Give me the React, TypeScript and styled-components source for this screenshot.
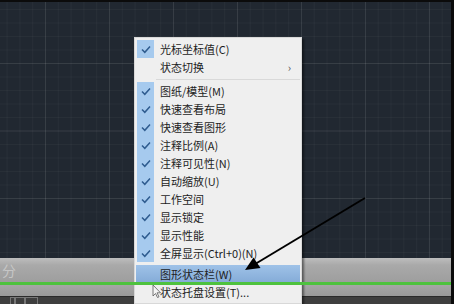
import React from 'react';
import styled, { createGlobalStyle } from 'styled-components';

const GlobalStyle = createGlobalStyle`
    html, body {
        margin: 0;
        padding: 0;
        background: #0b0b0b;
    }
`;

const Screen = styled.div`
    position: relative;
    width: 454px;
    height: 304px;
    padding: 2px 3px 0 0;
    box-sizing: border-box;
    background: #0b0b0b;
    display: flex;
    flex-direction: column;
    overflow: hidden;
    font-family: 'Noto Sans CJK SC', 'Noto Sans', sans-serif;
`;

const Canvas = styled.div`
    height: 256px;
    background-color: #212831;
    background-image:
        linear-gradient(90deg, rgba(255, 255, 255, 0.07) 1px, transparent 1px),
        linear-gradient(0deg, rgba(255, 255, 255, 0.07) 1px, transparent 1px),
        linear-gradient(90deg, rgba(255, 255, 255, 0.03) 1px, transparent 1px),
        linear-gradient(0deg, rgba(255, 255, 255, 0.03) 1px, transparent 1px);
    background-size: 64px 67.5px, 64px 67.5px, 12.8px 13.5px, 12.8px 13.5px;
    background-position: 45px 62px, 45px 62px, 45px 62px, 45px 62px;
`;

const StatusBar = styled.div`
    height: 24px;
    display: flex;
    align-items: center;
    background: linear-gradient(#bdbdbd, #a9a9a9 30%, #9e9e9e);
`;

const CommandHint = styled.span`
    margin-left: 2px;
    font-size: 14px;
    color: #cfcfcf;
    opacity: 0.8;
`;

const GreenLine = styled.div`
    position: relative;
    z-index: 3;
    height: 3px;
    background: #4ec23e;
`;

const LowerBar = styled.div`
    height: 11px;
    background: linear-gradient(#a6a6a6, #999999);
`;

const TabStrip = styled.div`
    height: 8px;
    display: flex;
    padding-left: 10px;
    background: #3e3e3e;
    border-top: 1px solid #2a2a2a;
    box-sizing: border-box;
`;

const Tab = styled.div<{ $w: number }>`
    width: ${(p) => p.$w}px;
    border: 1px solid #777;
    border-bottom: none;
    box-sizing: border-box;
`;

const Menu = styled.div`
    position: absolute;
    z-index: 2;
    left: 134px;
    top: 37px;
    width: 168px;
    padding: 2px 1px;
    box-sizing: border-box;
    background: #efefef;
    border: 1px solid #d8d8d8;
    box-shadow: 2px 2px 2px rgba(0, 0, 0, 0.45);
`;

const Item = styled.div<{ $active?: boolean }>`
    height: 18px;
    display: flex;
    align-items: center;
    background: ${(p) => (p.$active ? 'linear-gradient(#9fc2e8, #84abd7)' : 'transparent')};
`;

const CheckCell = styled.div<{ $on?: boolean }>`
    width: 17px;
    height: 100%;
    margin-left: 1px;
    display: flex;
    align-items: center;
    justify-content: center;
    background: ${(p) => (p.$on ? '#a6caee' : 'transparent')};
`;

const Label = styled.span`
    flex: 1;
    padding-left: 6px;
    font-size: 11px;
    color: #1d1d1d;
    white-space: nowrap;
`;

const SubArrow = styled.span`
    margin-right: 9px;
    font-size: 11px;
    color: #555;
`;

const Separator = styled.div<{ $h: number }>`
    height: ${(p) => p.$h}px;
    display: flex;
    align-items: center;
    padding-left: 20px;
    &::after {
        content: '';
        flex: 1;
        height: 1px;
        background: ${(p) => (p.$h > 4 ? '#d9d9d9' : 'transparent')};
    }
`;

const Overlay = styled.svg`
    position: absolute;
    z-index: 4;
    left: 0;
    top: 0;
    pointer-events: none;
`;

const Check = () => (
    <svg width="10" height="9" viewBox="0 0 10 9">
        <polyline points="1,4.5 3.8,7.3 9,1.5" fill="none" stroke="#2f5c8f" strokeWidth="1.5" />
    </svg>
);

type Entry = { label: string; checked?: boolean; sub?: boolean; active?: boolean };

const groupA: Entry[] = [
    { label: '光标坐标值(C)', checked: true },
    { label: '状态切换', sub: true },
];

const groupB: Entry[] = [
    { label: '图纸/模型(M)', checked: true },
    { label: '快速查看布局', checked: true },
    { label: '快速查看图形', checked: true },
    { label: '注释比例(A)', checked: true },
    { label: '注释可见性(N)', checked: true },
    { label: '自动缩放(U)', checked: true },
    { label: '工作空间', checked: true },
    { label: '显示锁定', checked: true },
    { label: '显示性能', checked: true },
    { label: '全屏显示(Ctrl+0)(N)', checked: true },
];

const groupC: Entry[] = [
    { label: '图形状态栏(W)', active: true },
    { label: '状态托盘设置(T)...' },
];

function MenuRow({ entry }: { entry: Entry }) {
    return (
        <Item $active={entry.active}>
            <CheckCell $on={entry.checked}>{entry.checked ? <Check /> : null}</CheckCell>
            <Label>{entry.label}</Label>
            {entry.sub ? <SubArrow>›</SubArrow> : null}
        </Item>
    );
}

export default function App() {
    return (
        <>
            <GlobalStyle />
            <Screen>
                <Canvas />
                <StatusBar>
                    <CommandHint>分</CommandHint>
                </StatusBar>
                <GreenLine />
                <LowerBar />
                <TabStrip>
                    <Tab $w={5} />
                    <Tab $w={10} />
                    <Tab $w={13} />
                </TabStrip>

                <Menu>
                    {groupA.map((e) => (
                        <MenuRow key={e.label} entry={e} />
                    ))}
                    <Separator $h={6} />
                    {groupB.map((e) => (
                        <MenuRow key={e.label} entry={e} />
                    ))}
                    <Separator $h={3} />
                    {groupC.map((e) => (
                        <MenuRow key={e.label} entry={e} />
                    ))}
                </Menu>

                <Overlay width="454" height="304" viewBox="0 0 454 304">
                    {/* annotation arrow */}
                    <line x1="365" y1="198" x2="256" y2="263.5" stroke="#000" strokeWidth="2" />
                    <polygon points="245,270 253.5,257.5 260.5,268" fill="#000" />
                    {/* mouse pointer */}
                    <path
                        d="M153 285 L153 296 L155.5 293.5 L157.5 297.5 L159 296.8 L157 292.8 L160.5 292.8 Z"
                        fill="rgba(255,255,255,0.35)"
                        stroke="#5a5a5a"
                        strokeWidth="0.8"
                    />
                </Overlay>
            </Screen>
        </>
    );
}
